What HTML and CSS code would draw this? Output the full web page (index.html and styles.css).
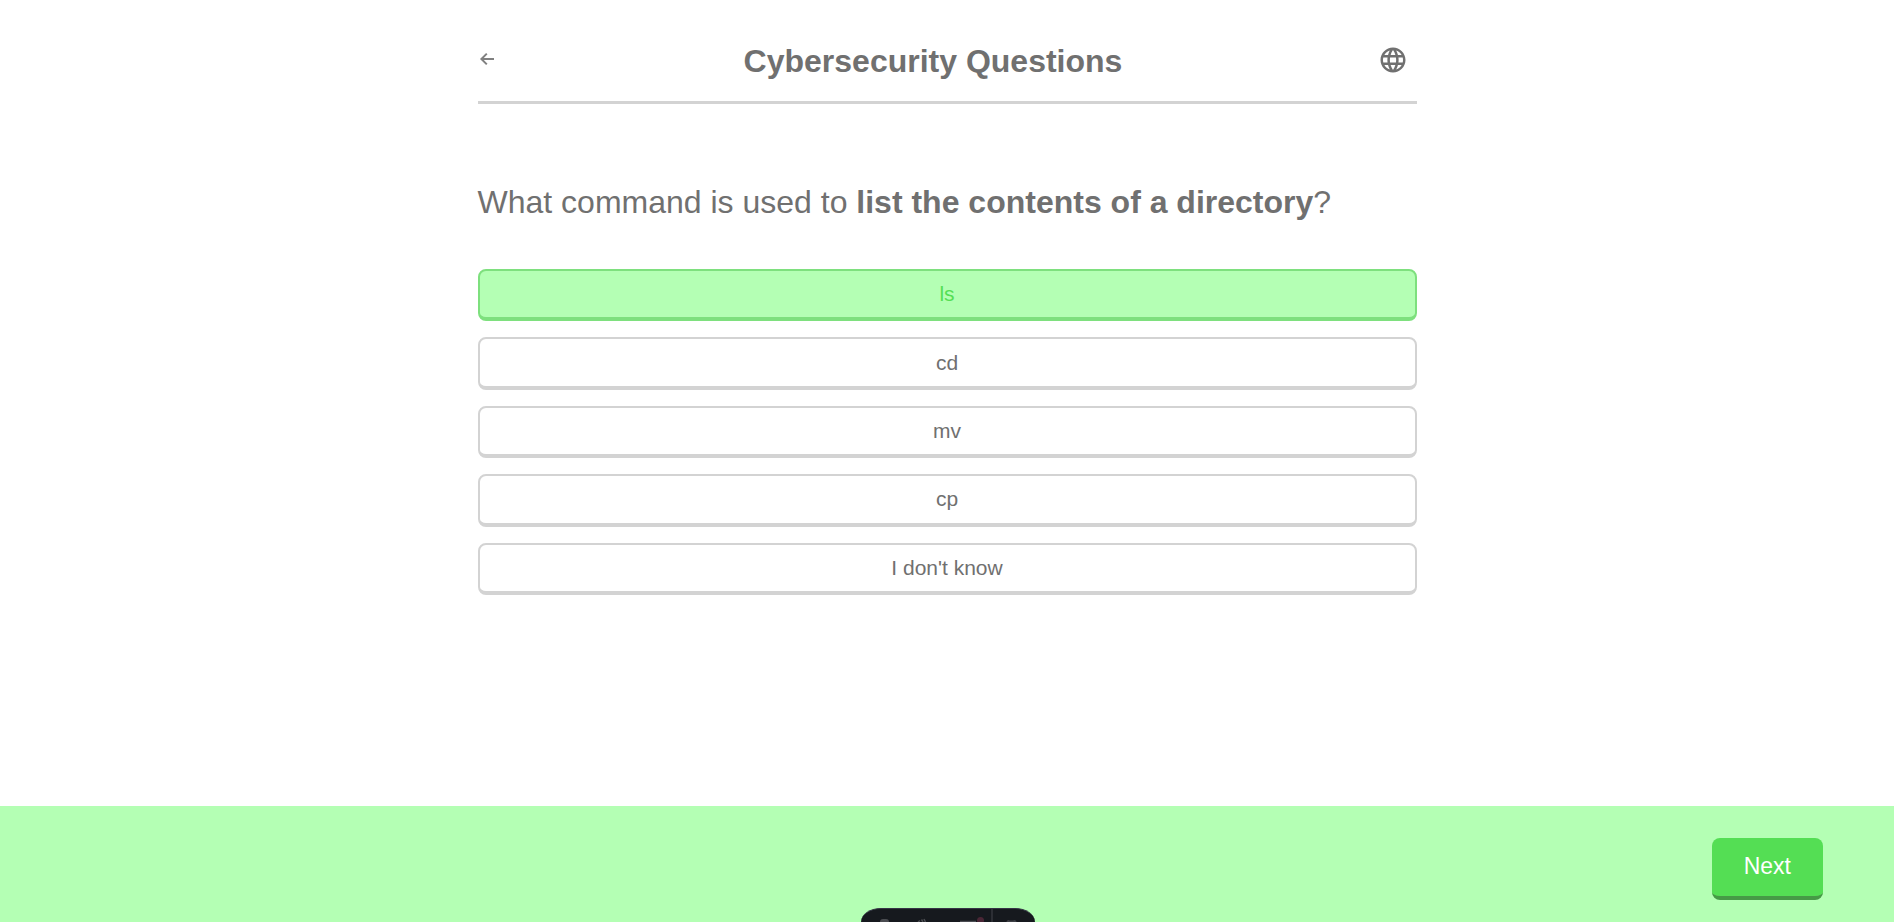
FILE: index.html
```html
<!DOCTYPE html>
<html lang="en">
<head>
<meta charset="utf-8">
<meta name="viewport" content="width=device-width, initial-scale=1">
<title>Cybersecurity Questions</title>
<link rel="stylesheet" href="styles.css">
</head>
<body>
<div class="page">
  <div class="quiz">
    <header class="quiz-header">
      <button class="icon-button back" type="button" aria-label="Back">
        <svg width="18" height="16" viewBox="0 0 18 16" fill="none" stroke="currentColor" stroke-width="2" aria-hidden="true"><path d="M16 8H4M8.800 2.600L3.400 8L8.800 13.400"/></svg>
      </button>
      <h1 class="title">Cybersecurity Questions</h1>
      <button class="icon-button language" type="button" aria-label="Language">
        <svg width="30" height="30" viewBox="0 0 24 24" fill="currentColor" aria-hidden="true"><path d="M11.99 2C6.47 2 2 6.48 2 12s4.47 10 9.99 10C17.52 22 22 17.52 22 12S17.52 2 11.99 2zm6.93 6h-2.95c-.32-1.250-.78-2.450-1.380-3.560 1.840.63 3.370 1.910 4.330 3.560zM12 4.040c.83 1.200 1.480 2.530 1.910 3.960h-3.820c.43-1.430 1.080-2.760 1.910-3.960zM4.260 14C4.100 13.360 4 12.690 4 12s.1-1.360.26-2h3.380c-.08.66-.14 1.320-.14 2 0 .68.06 1.340.14 2H4.260zm.82 2h2.950c.32 1.250.78 2.450 1.380 3.560-1.840-.63-3.370-1.900-4.330-3.560zm2.950-8H5.080c.96-1.660 2.490-2.930 4.330-3.560C8.810 5.550 8.350 6.750 8.030 8zM12 19.960c-.83-1.200-1.480-2.530-1.910-3.960h3.820c-.43 1.430-1.080 2.760-1.910 3.960zM14.340 14H9.660c-.09-.66-.16-1.320-.16-2 0-.68.07-1.350.16-2h4.680c.09.65.16 1.320.16 2 0 .68-.07 1.340-.16 2zm.25 5.560c.6-1.110 1.060-2.310 1.380-3.560h2.950c-.96 1.650-2.490 2.930-4.330 3.560zM16.360 14c.08-.66.14-1.320.14-2 0-.68-.06-1.340-.14-2h3.380c.16.64.26 1.310.26 2s-.1 1.360-.26 2h-3.380z"/></svg>
      </button>
    </header>
    <main>
      <h2 class="question">What command is used to <strong>list the contents of a directory</strong>?</h2>
      <div class="answers">
        <button class="answer correct" type="button">ls</button>
        <button class="answer" type="button">cd</button>
        <button class="answer" type="button">mv</button>
        <button class="answer" type="button">cp</button>
        <button class="answer" type="button">I don't know</button>
      </div>
    </main>
  </div>
  <footer class="result-bar">
    <button class="next" type="button">Next</button>
  </footer>
</div>
<div class="call-toolbar" aria-hidden="true">
  <svg width="174" height="14" viewBox="0 0 174 14">
    <path d="M19 14V13Q19 10 22 10H25Q28 10 28 13V14Z" fill="#4a4c51"/>
    <path d="M57 13L59 11.500M62 13L60.500 10.500M64.500 13L63 10" stroke="#4a4c51" stroke-width="1.5" fill="none"/>
    <path d="M99 12.500H115" stroke="#4a4c51" stroke-width="1.5"/>
    <circle cx="119.500" cy="11.500" r="3.500" fill="#4a2636"/>
    <path d="M131 0V14" stroke="#2c2e34" stroke-width="2"/>
    <path d="M145 14Q146 10 149 11.500H152Q155 10 156 14Z" fill="#3d3f45"/>
  </svg>
</div>
</body>
</html>
```
FILE: styles.css
```css
* {
  box-sizing: border-box;
}

body {
  margin: 0;
  background: #fff;
  color: #707070;
  font-family: "Liberation Sans", Arial, sans-serif;
}

button {
  margin: 0;
  font-family: inherit;
  color: inherit;
  cursor: pointer;
}

.page {
  display: flex;
  flex-direction: column;
  min-height: 100vh;
}

.quiz {
  flex: 1;
  width: 100%;
  max-width: 939px;
  margin: 0 auto;
}

.quiz-header {
  display: flex;
  align-items: center;
  justify-content: space-between;
  padding: 39px 0 17px;
  border-bottom: 3px solid #d3d3d3;
}

.icon-button {
  display: flex;
  padding: 0;
  border: 0;
  background: none;
}

.back {
  padding-bottom: 5px;
  color: #808080;
}

.language {
  padding: 0 8px 3px;
}

.title {
  margin: 0;
  font-size: 32px;
  line-height: 45px;
}

.question {
  margin: 80px 0 48px;
  font-size: 32px;
  font-weight: 400;
  line-height: 37px;
}

.answers {
  display: grid;
  grid-auto-rows: 1fr;
  gap: 16px;
  min-height: 326px;
}

.answer {
  padding: 12px;
  border: 2px solid #d3d3d3;
  border-bottom-width: 4px;
  border-radius: 8px;
  background: #fff;
  font-size: 21px;
  line-height: 22px;
}

.answer.correct {
  border-color: #7ee07e;
  background: #b4ffb4;
  color: #54de54;
}

.result-bar {
  display: flex;
  justify-content: flex-end;
  padding: 32px 71px 22px;
  background: #b4ffb4;
}

.next {
  padding: 15px 32px 17px;
  border: 0;
  border-bottom: 4px solid #469a46;
  border-radius: 8px;
  background: #54de54;
  color: #fff;
  font-size: 23px;
  line-height: 26px;
}

/* Floating toolbar, partly below the window's lower edge */
.call-toolbar {
  position: fixed;
  bottom: 0;
  left: 50%;
  width: 174px;
  height: 14px;
  margin-left: -86px;
  overflow: hidden;
  border-top: 1px solid #353545;
  border-radius: 20px 20px 0 0 / 14px 14px 0 0;
  background: #16191e;
}

.call-toolbar svg {
  display: block;
}
```
